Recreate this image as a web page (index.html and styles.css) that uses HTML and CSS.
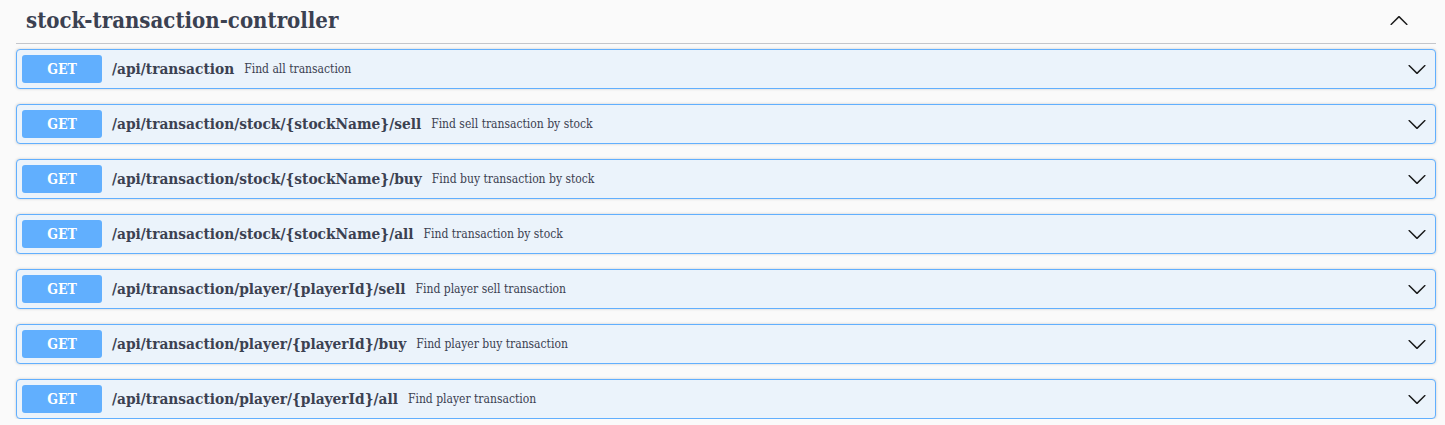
FILE: index.html
```html
<!DOCTYPE html>
<html>
<head>
<meta charset="utf-8">
<link rel="stylesheet" href="styles.css">
</head>
<body>
<div class="wrapper">
  <h3 class="tag">
    <span class="tag-name">stock-transaction-controller</span>
    <svg class="arrow-up" width="20" height="20" viewBox="0 0 20 20"><path d="M17.418 14.908c.272.268.709.268.979 0s.271-.701 0-.969l-7.908-7.83c-.27-.268-.707-.268-.979 0l-7.908 7.83c-.27.268-.27.701 0 .969.271.268.709.268.979 0L10 7.773l7.418 7.135z"/></svg>
  </h3>
  <div class="ops">
    <div class="op"><span class="method">GET</span><span class="path">/api/transaction</span><span class="desc">Find all transaction</span><svg class="arrow" width="20" height="20" viewBox="0 0 20 20"><path d="M17.418 6.109c.272-.268.709-.268.979 0s.271.701 0 .969l-7.908 7.83c-.27.268-.707.268-.979 0l-7.908-7.83c-.27-.268-.27-.701 0-.969.271-.268.709-.268.979 0L10 13.25l7.418-7.141z"/></svg></div>
    <div class="op"><span class="method">GET</span><span class="path">/api/transaction/stock/{stockName}/sell</span><span class="desc">Find sell transaction by stock</span><svg class="arrow" width="20" height="20" viewBox="0 0 20 20"><path d="M17.418 6.109c.272-.268.709-.268.979 0s.271.701 0 .969l-7.908 7.83c-.27.268-.707.268-.979 0l-7.908-7.830c-.27-.268-.27-.701 0-.969.271-.268.709-.268.979 0L10 13.25l7.418-7.141z"/></svg></div>
    <div class="op"><span class="method">GET</span><span class="path">/api/transaction/stock/{stockName}/buy</span><span class="desc">Find buy transaction by stock</span><svg class="arrow" width="20" height="20" viewBox="0 0 20 20"><path d="M17.418 6.109c.272-.268.709-.268.979 0s.271.701 0 .969l-7.908 7.83c-.27.268-.707.268-.979 0l-7.908-7.83c-.27-.268-.27-.701 0-.969.271-.268.709-.268.979 0L10 13.25l7.418-7.141z"/></svg></div>
    <div class="op"><span class="method">GET</span><span class="path">/api/transaction/stock/{stockName}/all</span><span class="desc">Find transaction by stock</span><svg class="arrow" width="20" height="20" viewBox="0 0 20 20"><path d="M17.418 6.109c.272-.268.709-.268.979 0s.271.701 0 .969l-7.908 7.83c-.27.268-.707.268-.979 0l-7.908-7.83c-.27-.268-.27-.701 0-.969.271-.268.709-.268.979 0L10 13.25l7.418-7.141z"/></svg></div>
    <div class="op"><span class="method">GET</span><span class="path">/api/transaction/player/{playerId}/sell</span><span class="desc">Find player sell transaction</span><svg class="arrow" width="20" height="20" viewBox="0 0 20 20"><path d="M17.418 6.109c.272-.268.709-.268.979 0s.271.701 0 .969l-7.908 7.83c-.27.268-.707.268-.979 0l-7.908-7.83c-.27-.268-.27-.701 0-.969.271-.268.709-.268.979 0L10 13.25l7.418-7.141z"/></svg></div>
    <div class="op"><span class="method">GET</span><span class="path">/api/transaction/player/{playerId}/buy</span><span class="desc">Find player buy transaction</span><svg class="arrow" width="20" height="20" viewBox="0 0 20 20"><path d="M17.418 6.109c.272-.268.709-.268.979 0s.271.701 0 .969l-7.908 7.83c-.27.268-.707.268-.979 0l-7.908-7.83c-.27-.268-.27-.701 0-.969.271-.268.709-.268.979 0L10 13.25l7.418-7.141z"/></svg></div>
    <div class="op"><span class="method">GET</span><span class="path">/api/transaction/player/{playerId}/all</span><span class="desc">Find player transaction</span><svg class="arrow" width="20" height="20" viewBox="0 0 20 20"><path d="M17.418 6.109c.272-.268.709-.268.979 0s.271.701 0 .969l-7.908 7.83c-.27.268-.707.268-.979 0l-7.908-7.83c-.27-.268-.27-.701 0-.969.271-.268.709-.268.979 0L10 13.25l7.418-7.141z"/></svg></div>
  </div>
</div>
</body>
</html>
```
FILE: styles.css
```css
html, body {
  margin: 0;
  padding: 0;
  background: #fafafa;
}
body {
  font-family: "DejaVu Serif Condensed", "DejaVu Serif", serif;
  color: #3b4151;
}
.wrapper {
  padding: 0 9px 0 16px;
}
.tag {
  display: flex;
  align-items: center;
  justify-content: space-between;
  height: 40px;
  margin: 0 0 5px;
  padding: 0 27px 3px 10px;
  border-bottom: 1px solid #c4c6cb;
  box-sizing: content-box;
}
.tag-name {
  font-size: 22px;
  font-weight: bold;
  color: #3b4151;
}
.arrow-up, .arrow {
  fill: #1a1a1a;
  flex: none;
}
.ops {
  display: flex;
  flex-direction: column;
  gap: 15px;
}
.op {
  display: flex;
  align-items: center;
  height: 38px;
  padding: 0 8px 0 5px;
  border: 1px solid #61affe;
  border-radius: 4px;
  background: #ebf3fb;
  box-shadow: 0 0 3px rgba(0,0,0,.19);
}
.method {
  flex: none;
  width: 80px;
  height: 28px;
  line-height: 28px;
  text-align: center;
  background: #61affe;
  color: #fff;
  font-size: 14px;
  font-weight: bold;
  border-radius: 3px;
}
.path {
  font-size: 15.3px;
  font-weight: bold;
  padding: 0 10px;
  color: #3b4151;
}
.desc {
  font-size: 12px;
  flex: 1;
  color: #3b4151;
}
```
